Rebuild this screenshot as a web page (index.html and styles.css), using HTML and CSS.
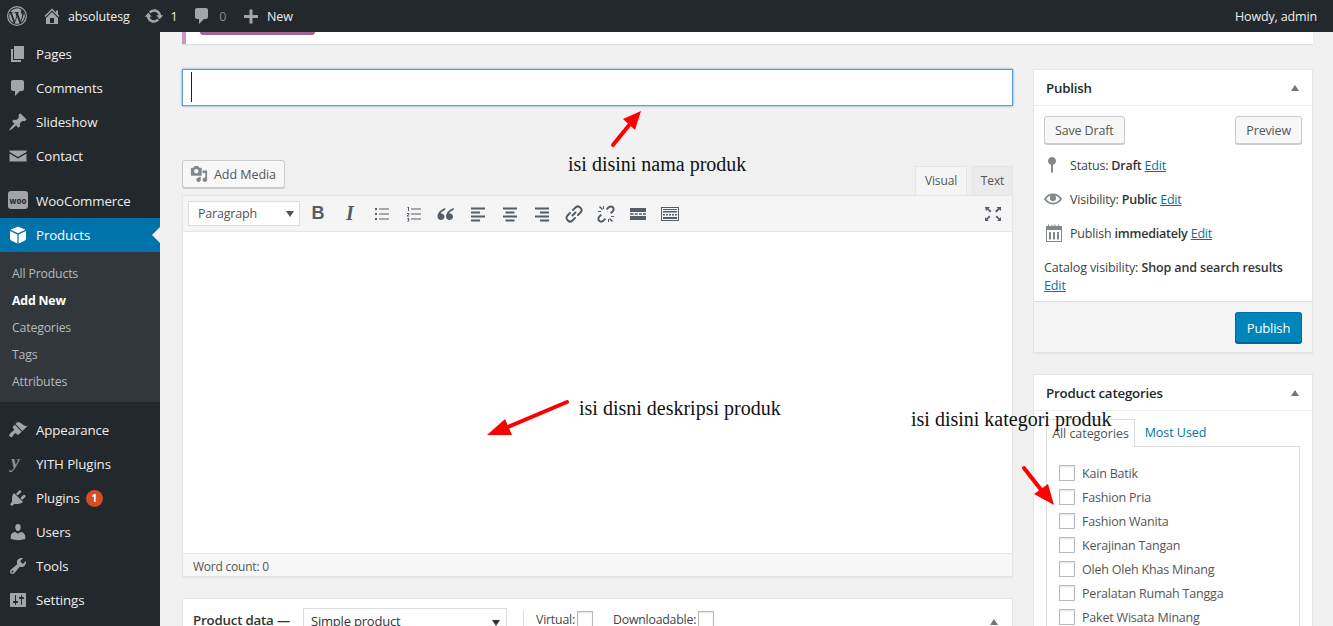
FILE: index.html
```html
<!DOCTYPE html>
<html lang="en">
<head>
<meta charset="utf-8">
<title>Add New Product</title>
<link rel="stylesheet" href="styles.css">
</head>
<body>
<div class="page">
  <header class="adminbar">
    <div class="bar-left">
      <svg class="logo" viewBox="0 0 20 20"><path fill-rule="evenodd" d="M10 0a10 10 0 1 1 0 20 10 10 0 0 1 0-20zm0 1.2a8.8 8.8 0 1 0 0 17.6 8.8 8.8 0 0 0 0-17.6z"/><path d="M2.2 10c0 3.1 1.8 5.800 4.400 7L2.900 6.800A7.800 7.800 0 0 0 2.200 10zm13-.4c0-1-.4-1.600-.7-2.200-.4-.7-.8-1.200-.8-1.800 0-.7.500-1.300 1.200-1.300h.1A7.800 7.800 0 0 0 3.200 6.100h.5c.8 0 2.100-.1 2.100-.1.4 0 .5.600 0 .6l-.9.100 2.900 8.500 1.700-5.100-1.200-3.400-.8-.1c-.4 0-.4-.6 0-.6 0 0 1.300.1 2.100.1s2.100-.1 2.100-.1c.4 0 .5.600 0 .6l-.9.100 2.800 8.400.8-2.600c.4-1.100.6-1.900.6-2.500zm-5.100 1.100l-2.300 6.800a7.800 7.800 0 0 0 4.800-.1l-.1-.1-2.400-6.600zm6.700-4.400l.1.800c0 .8-.1 1.700-.6 2.800l-2.400 6.800a7.800 7.800 0 0 0 2.900-10.400z"/></svg>
      <div class="bar-item">
        <svg class="bar-icon" viewBox="0 0 20 20"><path d="M16 8.500l1.530 1.530-1.060 1.060L10 4.620l-6.470 6.470-1.060-1.060L10 2.500l4 4v-2h2v4zm-6-2.460l6 5.990V18H4v-5.970zM12 17v-5H8v5h4z"/></svg>
        <span>absolutesg</span>
      </div>
      <div class="bar-item">
        <svg class="bar-icon" viewBox="0 0 20 20"><path d="M10.200 3.280c3.530 0 6.430 2.610 6.920 6h2.080l-3.500 4-3.500-4h2.320c-.45-1.970-2.210-3.450-4.320-3.450-1.450 0-2.730.71-3.540 1.780L4.950 5.660C6.230 4.200 8.110 3.280 10.200 3.280zm-.4 13.440c-3.520 0-6.430-2.610-6.920-6H.8l3.500-4c1.170 1.330 2.330 2.670 3.500 4H5.480c.45 1.970 2.210 3.450 4.320 3.450 1.450 0 2.730-.71 3.540-1.780l1.710 1.950c-1.280 1.460-3.150 2.380-5.250 2.380z"/></svg>
        <span>1</span>
      </div>
      <div class="bar-item">
        <svg class="bar-icon" viewBox="0 0 20 20"><path d="M5 2h9c1.100 0 2 .9 2 2v7c0 1.100-.9 2-2 2h-2l-5 5v-5H5c-1.100 0-2-.9-2-2V4c0-1.100.9-2 2-2z"/></svg>
        <span class="muted">0</span>
      </div>
      <div class="bar-item">
        <svg class="bar-icon" viewBox="0 0 20 20"><path d="M17 9v3h-5.500v5.500h-3V12H3V9h5.500V3.500h3V9z"/></svg>
        <span>New</span>
      </div>
    </div>
    <div class="howdy">Howdy, admin</div>
  </header>

  <div class="below">
    <nav class="sidebar">
      <a class="menu"><svg class="m-icon" viewBox="0 0 20 20"><path d="M6 15V2h10v13H6zm-1 1h8v2H3V5h2v11z"/></svg>Pages</a>
      <a class="menu"><svg class="m-icon" viewBox="0 0 20 20"><path d="M5 2h9c1.100 0 2 .9 2 2v7c0 1.100-.9 2-2 2h-2l-5 5v-5H5c-1.100 0-2-.9-2-2V4c0-1.100.9-2 2-2z"/></svg>Comments</a>
      <a class="menu"><svg class="m-icon" viewBox="0 0 20 20"><path d="M10.440 3.020l1.820-1.820 6.360 6.350-1.830 1.820c-1.050-.68-2.480-.57-3.410.36l-.75.75c-.92.93-1.040 2.350-.35 3.410l-1.830 1.820-2.410-2.410-2.800 2.790c-.42.42-3.380 2.710-3.800 2.290s1.860-3.390 2.280-3.810l2.790-2.790L4.100 9.360l1.830-1.820c1.050.69 2.480.57 3.400-.36l.75-.75c.93-.92 1.050-2.350.36-3.410z"/></svg>Slideshow</a>
      <a class="menu"><svg class="m-icon" viewBox="0 0 20 20"><path d="M1.500 4.500h17v1.500L10 11 1.500 6zM1.500 7.500L10 12.500l8.500-5v8h-17z"/></svg>Contact</a>
      <div class="sep"></div>
      <a class="menu"><span class="woo"><span class="woo-text">woo</span></span>WooCommerce</a>
      <a class="menu active"><svg class="m-icon white" viewBox="0 0 20 20"><path d="M10 1.500l7.500 3.300L10 8.300 2.500 4.800zM2 6l7.400 3.400V18.500L4 16q-2-.9-2-2.500zM18 6l-7.400 3.400V18.500L16 16q2-.9 2-2.500z"/></svg>Products<span class="notch"></span></a>
      <div class="submenu">
        <a class="sub">All Products</a>
        <a class="sub current">Add New</a>
        <a class="sub">Categories</a>
        <a class="sub">Tags</a>
        <a class="sub">Attributes</a>
      </div>
      <div class="sep"></div>
      <a class="menu"><svg class="m-icon" viewBox="0 0 20 20"><path d="M14.480 11.060L7.410 3.990l1.500-1.500c.5-.56 2.300-.47 3.510.32 1.210.8 1.430 1.280 2.910 2.100 1.180.64 2.450 1.260 4.450.85zm-.71.71L6.700 4.700 4.930 6.470c-.39.39-.39 1.020 0 1.410l1.060 1.060c.39.39.39 1.030 0 1.420-.6.6-1.430 1.110-2.210 1.690-.35.26-.7.53-1.010.84C1.430 13.710.96 15.120 1.400 16.100c.45 1.120 1.860 1.590 2.740.66.31-.31.58-.66.84-1.010.58-.78 1.090-1.610 1.690-2.210.39-.39 1.030-.39 1.420 0l1.060 1.060c.39.39 1.020.39 1.410 0z"/></svg>Appearance</a>
      <a class="menu"><span class="yith">y</span>YITH Plugins</a>
      <a class="menu"><svg class="m-icon" viewBox="0 0 20 20"><path d="M13.110 4.360L9.870 7.600 8 5.730l3.240-3.240c.35-.34 1.050-.2 1.560.32.52.51.66 1.210.31 1.550zm-8 1.770l.91-1.120 9.010 9.010-1.190.84c-.71.71-2.630 1.160-3.820 1.160H6.140L4.900 17.260c-.59.59-1.540.59-2.120 0-.59-.58-.59-1.530 0-2.120l1.240-1.240v-3.880c0-1.130.4-3.190 1.090-3.890zm7.260 3.970l3.240-3.240c.34-.35 1.040-.21 1.550.31.52.51.66 1.210.31 1.550l-3.240 3.250z"/></svg>Plugins<span class="badge">1</span></a>
      <a class="menu"><svg class="m-icon" viewBox="0 0 20 20"><path d="M10 9.250c-2.270 0-2.730-3.440-2.730-3.440C7 4.020 7.820 2 9.970 2c2.160 0 2.980 2.020 2.710 3.810 0 0-.41 3.440-2.680 3.440zm0 2.570L12.720 10c2.390 0 4.520 2.330 4.520 4.530v2.490s-3.650 1.130-7.240 1.130c-3.650 0-7.240-1.130-7.240-1.130v-2.490c0-2.250 1.940-4.480 4.470-4.480z"/></svg>Users</a>
      <a class="menu"><svg class="m-icon" viewBox="0 0 20 20"><path d="M16.680 9.770c-1.340 1.340-3.300 1.670-4.950.99l-5.410 6.520c-.99.99-2.590.99-3.580 0s-.99-2.590 0-3.570l6.520-5.420c-.68-1.650-.35-3.610.99-4.950 1.280-1.280 3.120-1.620 4.720-1.060l-2.890 2.890 2.820 2.820 2.860-2.870c.53 1.580.18 3.390-1.080 4.650zM3.810 16.210c.4.39 1.040.39 1.430 0 .4-.4.4-1.040 0-1.430-.39-.4-1.030-.4-1.430 0-.39.39-.39 1.030 0 1.430z"/></svg>Tools</a>
      <a class="menu"><svg class="m-icon" viewBox="0 0 20 20"><path d="M18 16V4c0-.55-.45-1-1-1H3c-.55 0-1 .45-1 1v12c0 .55.45 1 1 1h14c.55 0 1-.45 1-1zM8 11h1c.55 0 1 .45 1 1s-.45 1-1 1H8v1.500c0 .28-.22.5-.5.5s-.5-.22-.5-.5V13H6c-.55 0-1-.45-1-1s.45-1 1-1h1V5.500c0-.28.22-.5.5-.5s.5.22.5.5V11zm5-2h-1c-.55 0-1-.45-1-1s.45-1 1-1h1V5.500c0-.28.22-.5.5-.5s.5.22.5.5V7h1c.55 0 1 .45 1 1s-.45 1-1 1h-1v5.500c0 .28-.22.5-.5.5s-.5-.22-.5-.5V9z"/></svg>Settings</a>
    </nav>

    <main class="content">
      <div class="notice"><span class="notice-btn"></span></div>
      <div class="columns">
        <section class="primary">
          <div class="title-input"><span class="caret"></span></div>
          <div class="media-row">
            <button class="btn media-btn"><svg class="btn-icon" viewBox="0 0 20 20"><path d="M13 11V4c0-.55-.45-1-1-1h-1.670L9 1H5L3.670 3H2c-.55 0-1 .45-1 1v7c0 .55.45 1 1 1h10c.55 0 1-.45 1-1zM7 4.500c1.380 0 2.500 1.120 2.500 2.500S8.380 9.500 7 9.500 4.500 8.380 4.500 7 5.620 4.500 7 4.500zM14 6h5v10.500c0 1.380-1.120 2.500-2.500 2.500S14 17.880 14 16.500s1.120-2.500 2.500-2.500c.17 0 .34.02.5.05V9h-3V6zm-4 8.050V13h2v3.500c0 1.380-1.120 2.500-2.500 2.500S7 17.880 7 16.500 8.120 14 9.500 14c.17 0 .34.02.5.05z"/></svg>Add Media</button>
            <div class="tabs">
              <span class="ed-tab on">Visual</span>
              <span class="ed-tab">Text</span>
            </div>
          </div>
          <div class="editor">
            <div class="toolbar">
              <div class="format">Paragraph<span class="caret-down"></span></div>
              <span class="tool tool-text bold">B</span>
              <span class="tool tool-text italic">I</span>
              <span class="tool"><svg class="t-icon" viewBox="0 0 20 20"><path d="M3 4h2v2H3zM3 9h2v2H3zM3 14h2v2H3zM7 4.500h10v1H7zM7 9.500h10v1H7zM7 14.500h10v1H7z"/></svg></span>
              <span class="tool"><svg class="t-icon" viewBox="0 0 20 20"><path d="M7 4.500h10v1H7zM7 9.500h10v1H7zM7 14.500h10v1H7zM3.500 3H5v4H4V4h-.5zM3 9h2.200v2.500H4v.5h1.200v.6H3V11h1.200v-1H3zM3 14h2.200v3.500H3v-.6h1.200v-.8H3.500v-.6h.7v-.9H3z"/></svg></span>
              <span class="tool"><svg class="t-icon" viewBox="0 0 20 20"><path d="M9.500 4C6 5 1.500 8 1.500 12.500c0 2 1.500 3.500 3.500 3.500s3.500-1.500 3.500-3.300c0-1.800-1.300-3.200-3-3.200-.4 0-.7 0-.9.1.5-1.500 2.400-3 4.400-3.700zM18 4c-3.500 1-8 4-8 8.500 0 2 1.500 3.500 3.500 3.500s3.500-1.500 3.500-3.300c0-1.800-1.300-3.200-3-3.200-.4 0-.7 0-.9.1.5-1.500 2.400-3 4.400-3.700z"/></svg></span>
              <span class="tool"><svg class="t-icon" viewBox="0 0 20 20"><path d="M3 3.500h14v2H3zM3 7.500h9v2H3zM3 11.500h14v2H3zM3 15.500h9v2H3z"/></svg></span>
              <span class="tool"><svg class="t-icon" viewBox="0 0 20 20"><path d="M3 3.500h14v2H3zM5.500 7.500h9v2h-9zM3 11.500h14v2H3zM5.500 15.500h9v2h-9z"/></svg></span>
              <span class="tool"><svg class="t-icon" viewBox="0 0 20 20"><path d="M3 3.500h14v2H3zM8 7.500h9v2H8zM3 11.500h14v2H3zM8 15.500h9v2H8z"/></svg></span>
              <span class="tool"><svg class="t-icon stroke" viewBox="0 0 20 20"><path d="M8.500 11.500l3-3M9 6l2.500-2.500c1.300-1.300 3.300-1.300 4.600 0l.4.400c1.300 1.300 1.300 3.300 0 4.600L14 11M11 14l-2.500 2.500c-1.300 1.300-3.300 1.300-4.600 0l-.4-.4c-1.300-1.300-1.300-3.300 0-4.600L6 9"/></svg></span>
              <span class="tool"><svg class="t-icon" viewBox="0 0 20 20"><path d="M17.500 2.500c1.500 1.500 1.500 3.900 0 5.400l-2.200 2.200-1.400-1.400 2.200-2.200c.7-.7.7-1.900 0-2.600s-1.900-.7-2.600 0l-2.200 2.200-1.400-1.400 2.200-2.200c1.500-1.500 3.900-1.500 5.400 0zM2.500 17.500c-1.500-1.500-1.500-3.900 0-5.400l2.200-2.200 1.400 1.400-2.200 2.200c-.7.700-.7 1.900 0 2.600s1.900.7 2.600 0l2.200-2.200 1.400 1.400-2.200 2.200c-1.500 1.500-3.900 1.500-5.400 0zM3 3l1-1 3 3-1 1zM2 7h3v1H2zM7 2h1v3H7zM17 17l-1 1-3-3 1-1zM18 13h-3v-1h3zM13 18h-1v-3h1z"/></svg></span>
              <span class="tool"><svg class="t-icon" viewBox="0 0 20 20"><path d="M2 4h16v4H2zM2 9.300h3.500v1.400H2zM6.700 9.300h3v1.400h-3zM11 9.300h3v1.400h-3zM15 9.300h3v1.400h-3zM2 12h16v4H2z"/></svg></span>
              <span class="tool"><svg class="t-icon" viewBox="0 0 20 20"><path fill-rule="evenodd" d="M1 3h18v14H1zm1 1v12h16V4zM3 5h14v1H3zM3 7h14v1.500H3zM3 10h2v1.500H3zM6 10h2v1.500H6zM9 10h2v1.500H9zM12 10h2v1.500h-2zM15 10h2v1.500h-2zM3 13h14v2H3z"/></svg></span>
              <span class="tool full"><svg class="t-icon" viewBox="0 0 20 20"><path d="M2 3h5L5.500 4.500 8.500 7 7 8.500 4.500 5.500 3 7zM18 3v4l-1.500-1.500L13.500 8.500 12 7l3-2.500L13.500 3zM2 17v-4l1.500 1.500 2.500-3 1.500 1.500-3 2.500L6 17zM18 17h-4l1.500-1.500-3-2.500 1.500-1.500 2.500 3L18 13z"/></svg></span>
            </div>
            <div class="edit-area"></div>
            <div class="status">Word count: 0</div>
          </div>
          <div class="data-box">
            <span class="data-title">Product data —</span>
            <div class="data-select">Simple product<span class="caret-down dark"></span></div>
            <span class="data-sep"></span>
            <span class="data-label">Virtual:</span><span class="check tight"></span>
            <span class="data-label second">Downloadable:</span><span class="check tight"></span>
            <span class="toggle data-toggle"></span>
          </div>
        </section>

        <aside class="secondary">
          <div class="box publish">
            <div class="box-head"><h2>Publish</h2><span class="toggle"></span></div>
            <div class="pub-actions">
              <button class="btn small">Save Draft</button>
              <button class="btn small">Preview</button>
            </div>
            <div class="pub-row"><svg class="p-icon pin" viewBox="0 0 20 20"><path d="M14 6c0 1.860-1.280 3.410-3 3.860V16c0 1-1 2.500-1 2.500s-1-1.500-1-2.500V9.860c-1.720-.45-3-2-3-3.860 0-2.210 1.790-4 4-4s4 1.790 4 4z"/></svg><span>Status: <b>Draft</b> <a class="link">Edit</a></span></div>
            <div class="pub-row"><svg class="p-icon eye" viewBox="0 0 20 20"><path d="M19.700 9.400C17.700 6 14 3.900 10 3.900S2.300 6 .3 9.400L0 10l.3.6c2 3.400 5.700 5.500 9.700 5.500s7.700-2.100 9.700-5.500l.3-.6-.3-.6zM10 14.100c-3.100 0-6-1.600-7.700-4.100C3.600 8 5.700 6.600 8 6.100c-.9.6-1.500 1.700-1.500 2.900 0 1.900 1.600 3.500 3.500 3.500s3.500-1.600 3.500-3.500c0-1.200-.6-2.300-1.500-2.900 2.300.5 4.400 1.900 5.700 3.900-1.700 2.500-4.600 4.100-7.700 4.100z"/></svg><span>Visibility: <b>Public</b> <a class="link">Edit</a></span></div>
            <div class="pub-row"><svg class="p-icon cal" viewBox="0 0 20 20"><path fill-rule="evenodd" d="M2 3h2V1.500h1V3h2.500V1.500h1V3h2V1.500h1V3H14V1.500h1V3h3v16H2zm1 4v11h14V7zM5 9h2v7.500H5zM9 9h2v7.500H9zM13 9h2v7.500h-2z"/></svg><span>Publish <b>immediately</b> <a class="link">Edit</a></span></div>
            <div class="catalog">Catalog visibility: <b>Shop and search results</b><br><a class="link">Edit</a></div>
            <div class="pub-foot"><button class="btn primary-btn">Publish</button></div>
          </div>

          <div class="box cats">
            <div class="box-head"><h2>Product categories</h2><span class="toggle"></span></div>
            <div class="cat-body">
              <div class="cat-tabs">
                <span class="cat-tab on">All categories</span>
                <a class="cat-tab link-plain">Most Used</a>
              </div>
              <ul class="cat-panel">
                <li><span class="check"></span>Kain Batik</li>
                <li><span class="check"></span>Fashion Pria</li>
                <li><span class="check"></span>Fashion Wanita</li>
                <li><span class="check"></span>Kerajinan Tangan</li>
                <li><span class="check"></span>Oleh Oleh Khas Minang</li>
                <li><span class="check"></span>Peralatan Rumah Tangga</li>
                <li><span class="check"></span>Paket Wisata Minang</li>
              </ul>
            </div>
          </div>
        </aside>
      </div>
    </main>
  </div>

  <p class="note note-name">isi disini nama produk</p>
  <p class="note note-desc">isi disni deskripsi produk</p>
  <p class="note note-cat">isi disini kategori produk</p>
  <svg class="arrows" viewBox="0 0 1333 626">
    <path class="shaft" d="M613 145L630 124"/><path class="head" d="M641 111L623 119 635 130z"/>
    <path class="shaft" d="M567 402L508 427"/><path class="head" d="M487 435L505 419 512 435z"/>
    <path class="shaft" d="M1024 468L1042 491"/><path class="head" d="M1054 505L1034 494 1048 484z"/>
  </svg>
</div>
</body>
</html>
```

FILE: styles.css
```css
* { box-sizing: border-box; }
html, body { margin: 0; padding: 0; }
body {
  font-family: "Open Sans", "Liberation Sans", sans-serif;
  font-size: 12.5px;
  color: #444;
  background: #f1f1f1;
}
.page { position: relative; width: 1333px; height: 626px; overflow: hidden; display: flex; flex-direction: column; }

/* admin bar */
.adminbar { height: 32px; flex: none; background: #23282d; color: #eee; display: flex; justify-content: space-between; align-items: center; padding: 0 16px 0 7px; }
.bar-left { display: flex; align-items: center; }
.logo { width: 20px; height: 20px; fill: #a0a5aa; margin-right: 15px; }
.bar-item { display: flex; align-items: center; gap: 6px; margin-right: 14.800px; font-size: 12.500px; letter-spacing: -.15px; }
.bar-icon { width: 20px; height: 20px; fill: #a0a5aa; }
.muted { color: #888; margin-left: 1px; }
.howdy { font-size: 12.500px; letter-spacing: -.15px; }

.below { flex: 1; display: flex; min-height: 0; }

/* side menu */
.sidebar { width: 160px; flex: none; background: #23282d; padding-top: 5px; color: #eee; }
.menu { position: relative; display: flex; align-items: center; height: 34px; padding-left: 36px; font-size: 13.300px; letter-spacing: -.12px; }
.m-icon { position: absolute; left: 8px; top: 7px; width: 20px; height: 20px; fill: #a0a5aa; }
.m-icon.white { fill: #fff; }
.sep { height: 11px; }
.active { background: #0073aa; color: #fff; }
.notch { position: absolute; right: 0; top: 9px; border: 8px solid transparent; border-right-color: #f1f1f1; border-left-width: 0; }
.woo { position: absolute; left: 8px; top: 7px; width: 20px; height: 18px; border-radius: 3px; background: #a0a5aa; display: flex; align-items: center; justify-content: center; }
.woo-text { font-size: 8px; color: #23282d; font-weight: 700; letter-spacing: 0; }
.yith { position: absolute; left: 11px; top: 3px; font: italic 700 19px/24px "Liberation Serif", serif; color: #8c9196; }
.badge { width: 17px; height: 17px; margin-left: 6px; border-radius: 50%; background: #d54e21; color: #fff; font-size: 10px; font-weight: 700; display: flex; align-items: center; justify-content: center; letter-spacing: 0; }
.submenu { background: #32373c; padding: 8px 0 7px; }
.sub { display: flex; align-items: center; height: 27px; padding-left: 12px; font-size: 12.300px; letter-spacing: -.18px; color: #b4b9be; }
.sub.current { color: #fff; font-weight: 700; }

/* content */
.content { flex: 1; min-width: 0; padding: 0 20px 0 22px; }
.notice { height: 12px; background: #fff; border-left: 4px solid #cc99c2; box-shadow: 0 1px 1px rgba(0,0,0,.08); padding-left: 14px; }
.notice-btn { display: block; width: 115px; height: 3px; background: #a46497; border-radius: 0 0 3px 3px; }
.columns { display: flex; gap: 20px; margin-top: 25px; align-items: flex-start; }
.primary { width: 831px; flex: none; }
.secondary { width: 280px; flex: none; }

.title-input { height: 37px; background: #fff; border: 1px solid #5b9dd9; box-shadow: 0 0 2px rgba(30,140,190,.8); padding: 2px 0 0 8px; }
.caret { display: block; width: 1px; height: 30px; background: #222; }

.media-row { display: flex; justify-content: space-between; align-items: flex-end; margin-top: 54px; height: 35px; }
.btn { font: inherit; font-size: 12.500px; letter-spacing: -.15px; color: #555; background: #f7f7f7; border: 1px solid #ccc; border-radius: 3px; box-shadow: 0 1px 0 #ccc; padding: 0 10px; height: 28px; }
.media-btn { display: flex; align-items: center; gap: 6px; width: 103px; padding: 0 0 0 7px; margin-bottom: 7px; letter-spacing: -.05px; }
.btn-icon { width: 18px; height: 18px; fill: #82878c; }
.tabs { display: flex; gap: 5px; }
.ed-tab { height: 29px; display: flex; align-items: center; justify-content: center; padding-bottom: 2px; font-size: 12px; letter-spacing: -.15px; color: #555; background: #ebebeb; border: 1px solid #e5e5e5; border-bottom: 0; width: 41px; }
.ed-tab.on { width: 52px; background: #f5f5f5; }

.editor { background: #fff; border: 1px solid #e5e5e5; box-shadow: 0 1px 1px rgba(0,0,0,.04); }
.toolbar { height: 36px; background: #f5f5f5; border-bottom: 1px solid #e5e5e5; display: flex; align-items: center; padding-left: 5px; }
.format { position: relative; width: 112px; height: 25px; background: #fff; border: 1px solid #ddd; margin-right: 2px; padding-left: 9px; font-size: 12.500px; letter-spacing: -.2px; line-height: 24px; color: #555; }
.caret-down { position: absolute; right: 5px; top: 9px; border: 4px solid transparent; border-top: 6px solid #555; border-bottom: 0; }
.caret-down.dark { top: 11px; right: 6px; border-top-color: #333; }
.tool { width: 32px; height: 30px; display: flex; align-items: center; justify-content: center; color: #555d66; }
.t-icon { width: 20px; height: 20px; fill: #555d66; }
.t-icon.stroke { fill: none; stroke: #555d66; stroke-width: 2; stroke-linecap: round; }
.tool-text { font-size: 18px; font-family: "Liberation Sans", sans-serif; font-weight: 700; }
.italic { font-family: "Liberation Serif", serif; font-style: italic; font-size: 20px; }
.full { margin-left: auto; margin-right: 3px; }
.edit-area { height: 321px; background: #fff; }
.status { height: 23px; background: #f7f7f7; border-top: 1px solid #e5e5e5; padding-left: 10px; font-size: 12px; letter-spacing: -.22px; line-height: 25px; color: #555; }

.data-box { position: relative; display: flex; align-items: flex-start; margin-top: 21px; height: 60px; background: #fff; border: 1px solid #e5e5e5; padding: 9px 0 0 10px; }
.data-title { font-size: 13.300px; font-weight: 600; letter-spacing: -.2px; margin-right: 13px; line-height: 24px; color: #333; }
.data-select { position: relative; width: 204px; height: 30px; border: 1px solid #ddd; padding-left: 7px; font-size: 13px; letter-spacing: -.2px; line-height: 24px; color: #333; }
.data-sep { width: 1px; height: 24px; background: #ddd; margin: 2px 12px 0 16px; }
.data-label { font-size: 12.300px; letter-spacing: -.2px; line-height: 24px; margin-right: 2px; color: #444; }
.data-label.second { margin-left: 20px; }
.data-toggle { position: absolute; right: 14px; top: 20px; }

/* side boxes */
.box { background: #fff; border: 1px solid #e5e5e5; box-shadow: 0 1px 1px rgba(0,0,0,.04); }
.box-head { display: flex; justify-content: space-between; align-items: center; height: 36px; padding: 0 13px 0 12px; border-bottom: 1px solid #eee; }
.box-head h2 { margin: 0; font-size: 13.300px; font-weight: 600; letter-spacing: -.2px; color: #23282d; }
.toggle { display: block; border: 4.500px solid transparent; border-bottom: 6px solid #72777c; border-top: 0; }
.publish { height: 284px; display: flex; flex-direction: column; }
.pub-actions { display: flex; justify-content: space-between; padding: 10px 10px 0; margin-bottom: 4px; }
.pub-actions .small { height: 28px; padding: 0 10px; }
.pub-row { display: flex; align-items: center; height: 34px; padding-left: 36px; position: relative; font-size: 12.500px; letter-spacing: -.2px; }
.p-icon { position: absolute; top: 7px; width: 20px; height: 20px; fill: #82878c; }
.pin { left: 8px; top: 7px; }
.eye { left: 10px; width: 18px; }
.cal { left: 10px; }
b { font-weight: 600; color: #333; }
.link { color: #0073aa; text-decoration: underline; font-weight: 400; }
.catalog { padding: 9px 10px 0; font-size: 12.500px; letter-spacing: -.12px; line-height: 18px; }
.pub-foot { margin-top: auto; height: 51px; background: #f5f5f5; border-top: 1px solid #ddd; display: flex; justify-content: flex-end; align-items: flex-start; padding: 10px 10px 0; }
.primary-btn { height: 31px; width: 67px; padding: 0; background: #0085ba; color: #fff; border-color: #0073aa #006799 #006799; box-shadow: 0 1px 0 #006799; font-size: 13px; }

.cats { margin-top: 21px; height: 320px; }
.cat-body { padding: 8px 12px 0; }
.cat-tabs { display: flex; height: 28px; position: relative; z-index: 1; }
.cat-tab { display: flex; align-items: center; justify-content: center; padding-bottom: 1px; font-size: 12.500px; letter-spacing: -.05px; color: #555; }
.cat-tab.on { width: 89px; background: #fff; border: 1px solid #ddd; border-bottom: 0; }
.link-plain { color: #0073aa; width: 73px; margin-left: 4px; }
.cat-panel { list-style: none; margin: -1px 0 0; padding: 14px 0 0 12px; height: 240px; width: 254px; border: 1px solid #ddd; background: #fff; }
.cat-panel li { display: flex; align-items: center; gap: 7px; height: 24px; font-size: 12.500px; letter-spacing: -.2px; color: #555; }
.check { display: block; flex: none; width: 16px; height: 16px; border: 1px solid #b4b9be; background: #fff; box-shadow: inset 0 1px 2px rgba(0,0,0,.1); }
.check.tight { margin-top: 3px; }

/* annotations drawn over the screenshot */
.note { position: absolute; z-index: 2; margin: 0; font-family: "Liberation Serif", serif; font-size: 20px; line-height: 22px; color: #111; white-space: nowrap; }
.note-name { left: 568px; top: 153px; }
.note-desc { left: 579px; top: 397px; }
.note-cat { left: 911px; top: 408px; }
.arrows { position: absolute; z-index: 2; inset: 0; width: 1333px; height: 626px; pointer-events: none; }
.shaft { stroke: #f00; stroke-width: 4; fill: none; stroke-linecap: round; }
.head { fill: #f00; }
```
